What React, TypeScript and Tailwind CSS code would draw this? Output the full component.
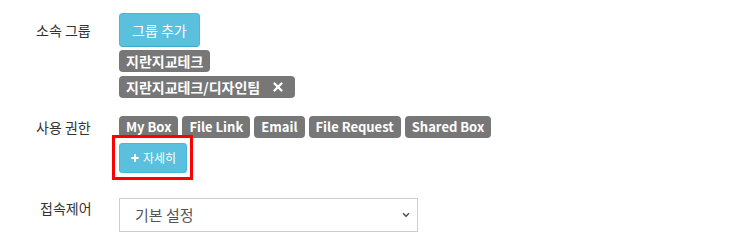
import { ChevronDown, Plus, X } from "lucide-react";

const groups = ["지란지교테크", "지란지교테크/디자인팀"];
const rights = ["My Box", "File Link", "Email", "File Request", "Shared Box"];

function Tag({ text, removable, latin }: { text: string; removable?: boolean; latin?: boolean }) {
  return (
    <span
      className={
        "inline-flex items-center h-[22px] px-[7px] rounded-[4px] bg-[#777] text-white font-bold leading-[22px] " +
        (latin ? "text-[13px]" : "text-[14px]")
      }
    >
      {text}
      {removable && <X className="ml-[11px] mr-[3px] w-[14px] h-[14px]" strokeWidth={4} />}
    </span>
  );
}

export default function App() {
  return (
    <div
      className="w-[755px] h-[241px] bg-white text-[#333] text-[14px]"
      style={{ fontFamily: '"Noto Sans CJK KR", "Noto Sans", sans-serif' }}
    >
      <div className="flex pt-[13px]">
        <div className="w-[119px] pl-[36px] pt-[7px] leading-[20px]">소속 그룹</div>
        <div className="flex flex-col items-start">
          <button className="h-[34px] px-[12px] rounded-[4px] bg-[#5bc0de] border border-[#46b8da] border-b-[#3fa9c9] text-white text-[14px]">
            그룹 추가
          </button>
          <div className="mt-[3px] flex flex-col items-start gap-[4px]">
            <Tag text={groups[0]} />
            <Tag text={groups[1]} removable />
          </div>
        </div>
      </div>

      <div className="flex mt-[18px]">
        <div className="w-[119px] pl-[36px] pt-[1px] leading-[20px]">사용 권한</div>
        <div className="flex flex-col items-start">
          <div className="flex gap-[4px]">
            {rights.map((r) => (
              <Tag key={r} text={r} latin />
            ))}
          </div>
          <div className="relative mt-[5px]">
            <button className="flex items-center h-[30px] w-[68px] justify-center rounded-[3px] bg-[#5bc0de] border border-[#46b8da] text-white text-[12px]">
              <Plus className="w-[10px] h-[10px] mr-[3px]" strokeWidth={5} />
              자세히
            </button>
            <div className="absolute -left-[7px] -right-[6px] -top-[8px] -bottom-[7px] border-[3px] border-[#ff0000] pointer-events-none" />
          </div>
        </div>
      </div>

      <div className="flex mt-[25px]">
        <div className="w-[119px] pl-[40px] leading-[20px]">접속제어</div>
        <div className="relative w-[299px]">
          <select className="w-full h-[34px] pl-[15px] pr-[30px] border border-[#ccc] bg-white text-[15px] text-[#555] appearance-none outline-none">
            <option>기본 설정</option>
          </select>
          <ChevronDown
            className="absolute right-[7px] top-[12px] w-[10px] h-[10px] text-[#555] pointer-events-none"
            strokeWidth={4}
          />
        </div>
      </div>
    </div>
  );
}
